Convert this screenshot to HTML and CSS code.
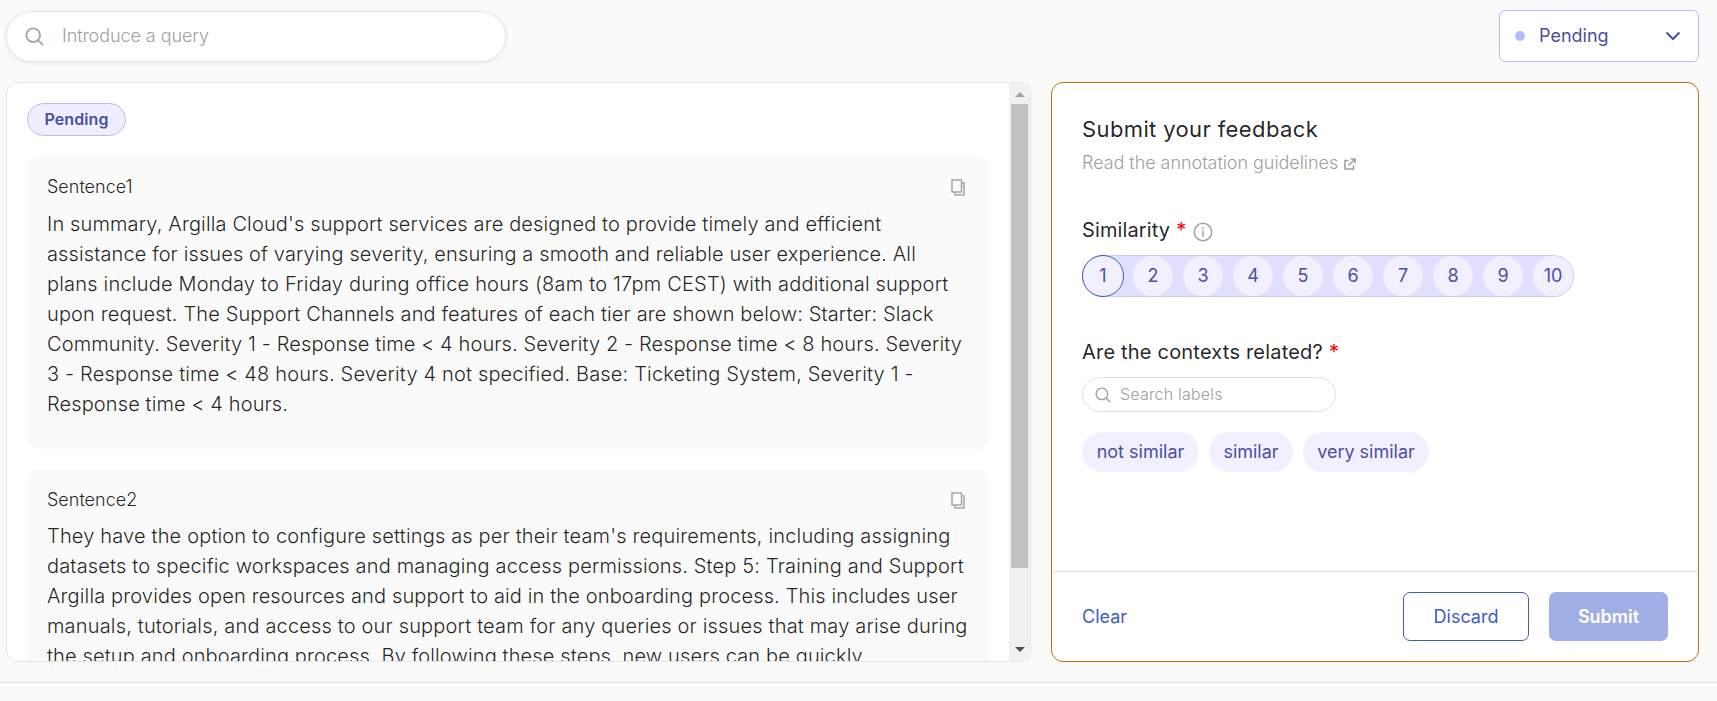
FILE: index.html
```html
<!DOCTYPE html>
<html lang="en">
<head>
<meta charset="utf-8">
<title>Feedback</title>
<link rel="stylesheet" href="styles.css">
</head>
<body>
<div class="page">
  <header class="topbar">
    <div class="query">
      <svg class="query-icon" viewBox="0 0 20 20"><circle cx="8.6" cy="8.6" r="7.2"/><path d="M13.8 13.8L19 19"/></svg>
      <span class="query-text">Introduce a query</span>
    </div>
    <div class="status">
      <span class="status-dot"></span>
      <span class="status-text">Pending</span>
      <svg class="chevron" viewBox="0 0 16 10"><path d="M1.5 1.5L8 8L14.5 1.5"/></svg>
    </div>
  </header>
  <main class="content">
    <section class="record">
      <div class="record-body">
        <span class="badge">Pending</span>
        <article class="field">
          <div class="field-head"><h2 class="field-title">Sentence1</h2>
            <svg class="copy" viewBox="0 0 14 17"><path d="M1 1H10.5V13H1ZM11 4H13V16H4V13.500"/></svg></div>
          <p class="field-text">
            <span class="line normal">In summary, Argilla Cloud's support services are designed to provide timely and efficient</span>
            <span class="line tight">assistance for issues of varying severity, ensuring a smooth and reliable user experience. All</span>
            <span class="line widest">plans include Monday to Friday during office hours (8am to 17pm CEST) with additional support</span>
            <span class="line normal">upon request. The Support Channels and features of each tier are shown below: Starter: Slack</span>
            <span class="line tight">Community. Severity 1 - Response time &lt; 4 hours. Severity 2 - Response time &lt; 8 hours. Severity</span>
            <span class="line wide">3 - Response time &lt; 48 hours. Severity 4 not specified. Base: Ticketing System, Severity 1 -</span>
            <span class="line tight">Response time &lt; 4 hours.</span>
          </p>
        </article>
        <article class="field field-second">
          <div class="field-head"><h2 class="field-title">Sentence2</h2>
            <svg class="copy" viewBox="0 0 14 17"><path d="M1 1H10.5V13H1ZM11 4H13V16H4V13.500"/></svg></div>
          <p class="field-text">
            <span class="line wide">They have the option to configure settings as per their team's requirements, including assigning</span>
            <span class="line wide">datasets to specific workspaces and managing access permissions. Step 5: Training and Support</span>
            <span class="line normal">Argilla provides open resources and support to aid in the onboarding process. This includes user</span>
            <span class="line wide">manuals, tutorials, and access to our support team for any queries or issues that may arise during</span>
            <span class="line normal">the setup and onboarding process. By following these steps, new users can be quickly</span>
          </p>
        </article>
      </div>
      <div class="scrollbar">
        <span class="arrow arrow-up"></span>
        <span class="thumb"></span>
        <span class="arrow arrow-down"></span>
      </div>
    </section>
    <section class="feedback">
      <div class="form">
        <h1 class="form-title">Submit your feedback</h1>
        <a class="guidelines"><span class="guidelines-text">Read the annotation guidelines</span>
          <svg class="external" viewBox="0 0 12 12"><path d="M4.500 2.500H1V11H9.500V7.500M6.500 1H11V5.500M11 1L4.500 7.500"/></svg></a>
        <div class="question">
          <span class="question-text">Similarity</span><span class="star">*</span>
          <svg class="info" viewBox="0 0 20 20"><circle cx="10" cy="10" r="8.700"/><path d="M10 8.500V15M10 5.200V7"/></svg>
        </div>
        <div class="rating">
          <span class="rate rate-active">1</span><span class="rate">2</span><span class="rate">3</span><span class="rate">4</span><span class="rate">5</span><span class="rate">6</span><span class="rate">7</span><span class="rate">8</span><span class="rate">9</span><span class="rate">10</span>
        </div>
        <div class="question question-labels">
          <span class="question-text">Are the contexts related?</span><span class="star">*</span>
        </div>
        <div class="label-search">
          <svg class="label-icon" viewBox="0 0 20 20"><circle cx="8.6" cy="8.6" r="7.2"/><path d="M13.8 13.8L19 19"/></svg>
          <span class="label-placeholder">Search labels</span>
        </div>
        <div class="labels"><span class="label label-a">not similar</span><span class="label label-b">similar</span><span class="label label-c">very similar</span></div>
      </div>
      <footer class="actions">
        <span class="clear">Clear</span>
        <span class="button discard">Discard</span>
        <span class="button submit">Submit</span>
      </footer>
    </section>
  </main>
  <div class="bottom"></div>
</div>
</body>
</html>
```
FILE: styles.css
```css
* { box-sizing: border-box; }
body {
  margin: 0;
  background: #fafafa;
  font-family: Inter, "Liberation Sans", sans-serif;
  color: rgba(0, 0, 0, 0.87);
  overflow: hidden;
}
h1, h2, p { margin: 0; font-weight: 400; }
svg { fill: none; flex: none; display: block; }
span { white-space: nowrap; }
.page { height: 701px; display: flex; flex-direction: column; }
.topbar {
  display: flex;
  flex: none;
  justify-content: space-between;
  align-items: flex-start;
  padding: 10px 18px 0 6px;
  height: 82px;
}
.query {
  display: flex;
  align-items: center;
  width: 500px;
  height: 51px;
  margin-top: 1px;
  padding-left: 18px;
  background: #fff;
  border: 1px solid #e6e6e6;
  border-radius: 26px;
  box-shadow: 0 1px 4px 1px rgba(0, 0, 0, 0.06);
}
.query-icon { width: 19px; height: 19px; stroke: #a6a6a6; stroke-width: 2; }
.query-text {
  margin: 0 0 2px 18px;
  font-size: 18px;
  font-weight: 300;
  letter-spacing: -0.07px;
  color: #a0a0a0;
}
.status {
  display: flex;
  align-items: center;
  width: 200px;
  height: 52px;
  padding: 0 17px 0 15px;
  background: #fff;
  border: 1px solid #b6b9ff;
  border-radius: 6px;
  color: #4c4ea3;
}
.status-dot { width: 10px; height: 10px; border-radius: 50%; background: #b6b9ff; }
.status-text { margin: 0 0 1px 14px; font-size: 18px; }
.chevron { width: 16px; height: 10px; margin-left: auto; stroke: #4c4ea3; stroke-width: 2; }
.content { display: flex; flex: none; gap: 20px; height: 580px; padding: 0 18px 0 6px; }
.record {
  display: flex;
  width: 1025px;
  height: 580px;
  background: #fff;
  border: 1px solid #e6e6e6;
  border-radius: 12px;
}
.record-body {
  display: flex;
  flex-direction: column;
  align-items: flex-start;
  width: 1002px;
  height: 578px;
  padding: 20px;
  overflow: hidden;
}
.badge {
  flex: none;
  width: 99px;
  height: 33px;
  margin-bottom: 20px;
  border: 1px solid #b6b9ff;
  border-radius: 17px;
  background: #efeeff;
  color: #4c4ea3;
  font-size: 16px;
  font-weight: 600;
  letter-spacing: 0.1px;
  line-height: 31px;
  text-align: center;
}
.field {
  flex: none;
  width: 962px;
  height: 293px;
  margin-bottom: 20px;
  padding: 20px;
  background: #fafafa;
  border-radius: 12px;
}
.field-head { display: flex; justify-content: space-between; height: 33px; }
.field-second .field-head { height: 32px; }
.field-title { font-size: 18px; font-weight: 300; line-height: 22px; }
.copy { width: 14px; height: 17px; margin: 3px 4px 0 0; stroke: #a6a6a6; stroke-width: 1.5; }
.field-text { font-size: 20px; font-weight: 300; line-height: 30px; }
.line { display: block; }
.tight { letter-spacing: 0.115px; }
.normal { letter-spacing: 0.138px; }
.wide { letter-spacing: 0.168px; }
.widest { letter-spacing: 0.2px; }
.scrollbar {
  display: flex;
  flex-direction: column;
  align-items: center;
  width: 21px;
  height: 578px;
  background: #f1f1f1;
}
.arrow { border: 5px solid transparent; border-top: 0; border-bottom: 0; }
.arrow-up { margin-top: 9px; border-bottom: 5px solid #a3a3a3; }
.thumb { width: 17px; height: 464px; margin-top: 7px; background: #c1c1c1; }
.arrow-down { margin-top: 79px; border-top: 5px solid #505050; }
.feedback {
  display: flex;
  flex-direction: column;
  width: 648px;
  height: 580px;
  background: #fff;
  border: 1px solid #bb720a;
  border-radius: 12px;
}
.form { flex: none; height: 488px; padding: 32px 30px 0; }
.form-title { font-size: 22px; letter-spacing: 0.38px; line-height: 28px; }
.guidelines { display: flex; align-items: center; height: 22px; margin-top: 8px; color: #a0a0a0; }
.guidelines-text { font-size: 18px; font-weight: 300; letter-spacing: -0.05px; }
.external { width: 12px; height: 12px; margin: 3px 0 0 6px; stroke: #a0a0a0; stroke-width: 1.6; }
.question { display: flex; align-items: center; height: 26px; margin-top: 44px; font-size: 20px; }
.question-text { letter-spacing: 0.12px; }
.star { margin-left: 6px; color: #ff0000; }
.info { width: 20px; height: 20px; margin: 3px 0 0 7px; stroke: #a6a6a6; stroke-width: 1.6; }
.rating {
  display: flex;
  align-items: center;
  gap: 10px;
  width: 492px;
  height: 42px;
  margin-top: 12px;
  background: #e0dfff;
  border-radius: 21px;
  box-shadow: inset 0 0 0 1px #cdcdff;
}
.rate {
  flex: none;
  width: 40px;
  height: 40px;
  border-radius: 50%;
  background: #f2f0ff;
  color: #4c4ea3;
  font-size: 18px;
  line-height: 40px;
  text-align: center;
}
.rate-active { width: 42px; height: 42px; margin-right: -1px; border: 1px solid #3e5cc9; }
.question-labels { margin-top: 42px; }
.question-labels .question-text { letter-spacing: 0.2px; }
.label-search {
  display: flex;
  align-items: center;
  width: 254px;
  height: 35px;
  margin-top: 12px;
  padding-left: 12px;
  border: 1px solid #e0e0e0;
  border-radius: 18px;
}
.label-icon { width: 16px; height: 16px; stroke: #a0a0a0; stroke-width: 1.8; }
.label-placeholder {
  margin: 0 0 2px 9px;
  font-size: 16px;
  font-weight: 300;
  letter-spacing: 0.2px;
  color: #a0a0a0;
}
.labels { display: flex; gap: 10px; margin-top: 20px; }
.label {
  height: 40px;
  border-radius: 20px;
  background: #f2f0ff;
  color: #4c4ea3;
  font-size: 18px;
  line-height: 40px;
  text-align: center;
}
.label-a { width: 117px; }
.label-b { width: 84px; }
.label-c { width: 126px; }
.actions {
  display: flex;
  flex: none;
  align-items: center;
  height: 90px;
  padding: 0 30px;
  border-top: 1px solid #e0e0e0;
}
.clear { color: #3e5cc9; font-size: 18px; margin-right: auto; }
.button { height: 49px; border-radius: 7px; font-size: 18px; line-height: 49px; text-align: center; }
.discard { width: 126px; border: 1px solid #3e5cc9; color: #3e5cc9; line-height: 47px; margin-right: 20px; }
.submit { width: 119px; background: #9faee4; color: #fff; font-weight: 600; }
.bottom { margin-top: 20px; border-top: 1px solid #e0e0e0; }
```
